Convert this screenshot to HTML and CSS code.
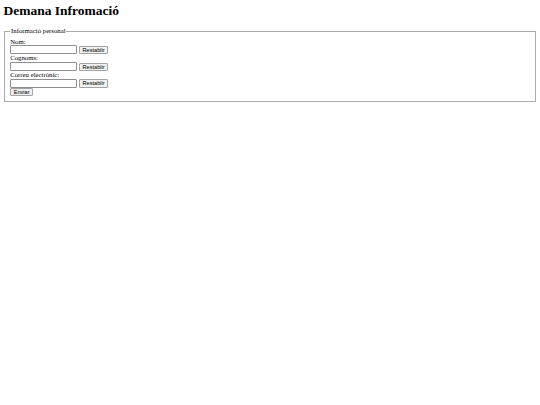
FILE: index.html
```html
<!DOCTYPE html>
<html lang="ca">
<head>
<meta charset="utf-8">
<title>Demana Infromació</title>
<link rel="stylesheet" href="styles.css">
</head>
<body>
<h1 class="title">Demana Infromació</h1>
<form class="form">
  <fieldset class="group">
    <legend class="group-legend">Informació personal</legend>
    <label class="field-label" for="nom">Nom:</label>
    <div class="field-row">
      <input class="text-input" type="text" id="nom" name="nom">
      <button class="btn" type="button">Restablir</button>
    </div>
    <label class="field-label" for="cognoms">Cognoms:</label>
    <div class="field-row">
      <input class="text-input" type="text" id="cognoms" name="cognoms">
      <button class="btn" type="button">Restablir</button>
    </div>
    <label class="field-label" for="correu">Correu electrònic:</label>
    <div class="field-row">
      <input class="text-input" type="text" id="correu" name="correu">
      <button class="btn" type="button">Restablir</button>
    </div>
    <div class="submit-row">
      <button class="btn" type="submit">Enviar</button>
    </div>
  </fieldset>
</form>
</body>
</html>
```
FILE: styles.css
```css
html, body {
  background: #ffffff;
}
body {
  margin: 3.4px;
  font-family: "Liberation Serif", "Times New Roman", serif;
  font-size: 6.75px;
  color: #000000;
}
.title {
  font-size: 13.5px;
  font-weight: bold;
  margin: 0 0 9px 0;
  line-height: 15px;
}
.form {
  margin: 0;
}
.group {
  margin: 0 0.85px;
  padding: 2.4px 5px 4.2px 5px;
  border: 1px solid #ababab;
}
.group-legend {
  padding: 0 0.85px;
  line-height: 7.8px;
}
.field-label {
  display: block;
  line-height: 7.8px;
}
.field-row {
  display: flex;
  align-items: center;
  gap: 1.8px;
  height: 9px;
}
.submit-row {
  display: flex;
  align-items: center;
  height: 8.4px;
}
.text-input {
  box-sizing: border-box;
  width: 67px;
  height: 9px;
  margin: 0;
  padding: 0 1px;
  border: 1px solid #8f8f8f;
  border-radius: 1px;
  font-family: "Liberation Sans", Arial, sans-serif;
  font-size: 5.6px;
  background: #ffffff;
}
.btn {
  box-sizing: border-box;
  height: 8.2px;
  margin: 0;
  padding: 0 2.5px;
  border: 1px solid #a3a3a3;
  border-radius: 1px;
  background: #efefef;
  font-family: "Liberation Sans", Arial, sans-serif;
  font-size: 5.6px;
  line-height: 6px;
  color: #000000;
}
```
